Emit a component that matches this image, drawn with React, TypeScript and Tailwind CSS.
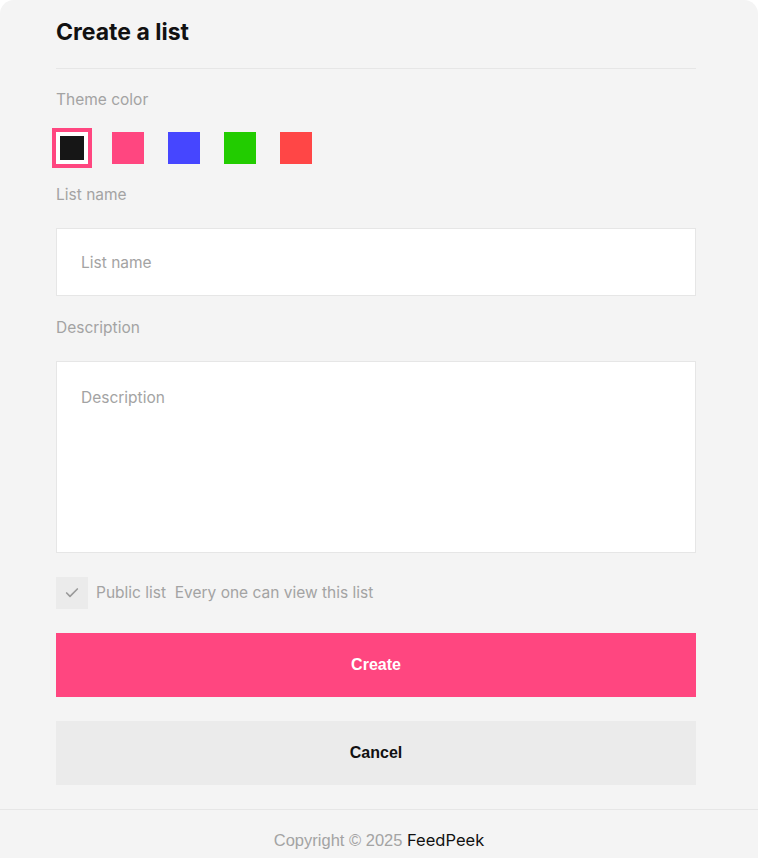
import { Check } from "lucide-react";

const colors = ["#161616", "#ff4680", "#4646ff", "#22cc00", "#ff4646"];

export default function App() {
  return (
    <div className="min-h-[858px] bg-white font-['Inter',sans-serif]">
      <div className="flex min-h-[858px] flex-col rounded-t-[14px] bg-[#f4f4f4]">
        <div className="flex-1 px-[56px] pr-[62px]">
          <h1 className="pt-[18px] pb-[22px] text-[23px] font-bold leading-[28px] text-[#111]">
            Create a list
          </h1>
          <div className="h-px bg-[#e6e6e6]" />

          <p className="mt-[21px] text-[15.5px] leading-[20px] text-[#a3a3a3]">Theme color</p>
          <div className="mt-[22px] flex gap-6">
            {colors.map((c, i) => (
              <button
                key={c}
                className={
                  i === 0
                    ? "h-8 w-8 border-4 border-white ring-4 ring-[#ff4680]"
                    : "h-8 w-8"
                }
                style={{ backgroundColor: c }}
              />
            ))}
          </div>

          <p className="mt-[21px] text-[15.5px] leading-[20px] text-[#a3a3a3]">List name</p>
          <input
            className="mt-[23px] block h-[68px] w-full border border-[#e6e6e6] bg-white px-6 text-[15.5px] placeholder:text-[#a3a3a3] outline-none"
            placeholder="List name"
          />

          <p className="mt-[22px] text-[15.5px] leading-[20px] text-[#a3a3a3]">Description</p>
          <textarea
            className="mt-[23px] block h-[192px] w-full resize-none border border-[#e6e6e6] bg-white px-6 pt-[26px] text-[15.5px] leading-[20px] placeholder:text-[#a3a3a3] outline-none"
            placeholder="Description"
          />

          <div className="mt-6 flex items-center gap-2">
            <div className="flex h-8 w-8 items-center justify-center bg-[#ebebeb]">
              <Check size={16} strokeWidth={2.5} className="text-[#9a9a9a]" />
            </div>
            <span className="text-[15.5px] text-[#a3a3a3]">
              Public list&nbsp; Every one can view this list
            </span>
          </div>

          <button className="mt-6 block h-16 w-full bg-[#ff4680] font-['Liberation_Sans',sans-serif] text-[16px] font-bold text-white">
            Create
          </button>
          <button className="mt-6 block h-16 w-full bg-[#ebebeb] font-['Liberation_Sans',sans-serif] text-[16px] font-bold text-[#111]">
            Cancel
          </button>
        </div>

        <footer className="mt-6 border-t border-[#e6e6e6] pt-[19px] pb-[18px] text-center text-[16.5px] leading-[22px]">
          <span className="font-['Liberation_Sans',sans-serif] text-[#a3a3a3]">Copyright © 2025 </span>
          <span className="text-[#111]">FeedPeek</span>
        </footer>
      </div>
    </div>
  );
}
